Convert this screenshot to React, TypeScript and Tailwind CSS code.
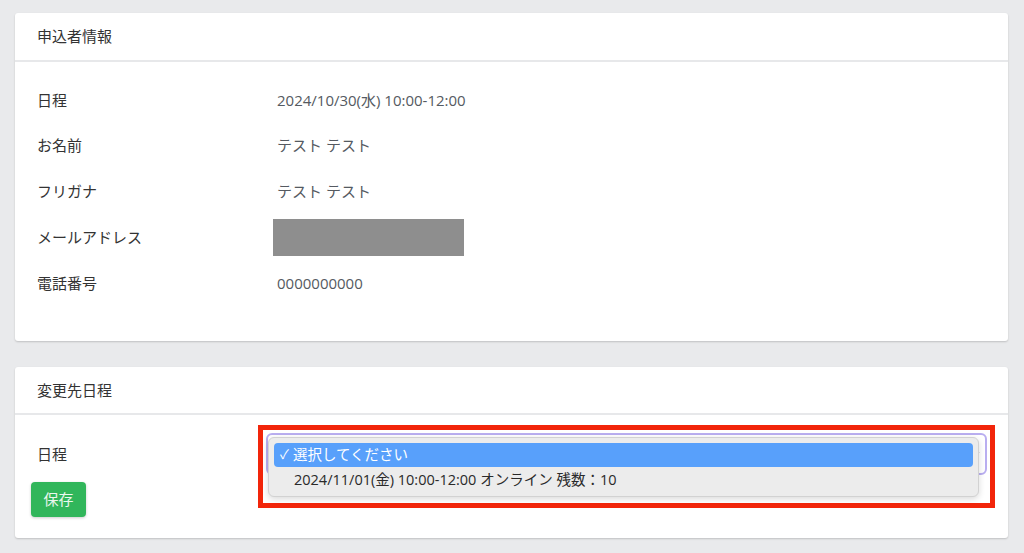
const rows: { label: string; value: string | null }[] = [
  { label: '日程', value: '2024/10/30(水) 10:00-12:00' },
  { label: 'お名前', value: 'テスト テスト' },
  { label: 'フリガナ', value: 'テスト テスト' },
  { label: 'メールアドレス', value: null },
  { label: '電話番号', value: '0000000000' },
];

export default function App() {
  return (
    <div
      className="min-h-[553px] w-[1024px] bg-[#e9eaec] pl-[15px] pr-[16px] pt-[13px] text-[15px]"
      style={{ fontFamily: '"Open Sans", "Noto Sans CJK JP", sans-serif' }}
    >
      {/* 申込者情報 */}
      <div className="rounded-[3px] bg-white shadow-[0_1px_2px_rgba(0,0,0,0.18)]">
        <div className="flex h-[49px] items-center border-b-2 border-[#e7e8ea] px-[22px] text-[#333]">
          申込者情報
        </div>
        <div className="px-[22px] pb-[35px] pt-[15px]">
          {rows.map((row) => (
            <div key={row.label} className="flex h-[45.8px] items-center">
              <div className="w-[240px] text-[#333]">{row.label}</div>
              {row.value ? (
                <div className="text-[#555a61]">{row.value}</div>
              ) : (
                <div className="ml-[-4px] h-[37px] w-[191px] bg-[#8e8e8e]" />
              )}
            </div>
          ))}
        </div>
      </div>

      {/* 変更先日程 */}
      <div className="mt-[26px] rounded-[3px] bg-white shadow-[0_1px_2px_rgba(0,0,0,0.18)]">
        <div className="flex h-[48px] items-center border-b-2 border-[#e7e8ea] px-[22px] text-[#333]">
          変更先日程
        </div>
        <div className="flex pb-[21px] pl-[16px] pt-[10px]">
          <div className="w-[227px] pt-[19px]">
            <div className="pl-[6px] leading-5 text-[#333]">日程</div>
            <button className="mt-[18px] h-[35px] w-[55px] rounded-[4px] bg-[#31b65b] text-[#eaf7ee] shadow-[0_1px_3px_rgba(0,0,0,0.2)]">
              保存
            </button>
          </div>

          <div className="relative h-[83px] w-[737px] border-[5px] border-[#f2250a] bg-white">
            <div className="ml-[3px] mt-[3px] flex h-[42px] w-[721px] items-center justify-end rounded-[6px] border-2 border-[#b9aef0] bg-white pr-[4px]">
              <svg width="8" height="8" viewBox="0 0 8 8" className="text-[#555]">
                <path d="M1 6 L6 2" stroke="currentColor" strokeWidth="1.2" />
              </svg>
            </div>

            <div className="absolute left-[5px] top-[7px] h-[60px] w-[711px] rounded-[6px] border border-[#d2d2d2] bg-[#ececec] px-[5px] pt-[5px] text-[14.5px] shadow-[0_2px_6px_rgba(0,0,0,0.15)]">
              <div className="flex h-[24px] items-center rounded-[4px] bg-[#58a0fb] pl-[6px] text-white">
                <span className="mr-[4px] text-[13px]">✓</span>
                選択してください
              </div>
              <div className="flex h-[26px] items-center pl-[20px] text-[#2a2a2a]">
                2024/11/01(金) 10:00-12:00 オンライン 残数：10
              </div>
            </div>
          </div>
        </div>
      </div>
    </div>
  );
}
